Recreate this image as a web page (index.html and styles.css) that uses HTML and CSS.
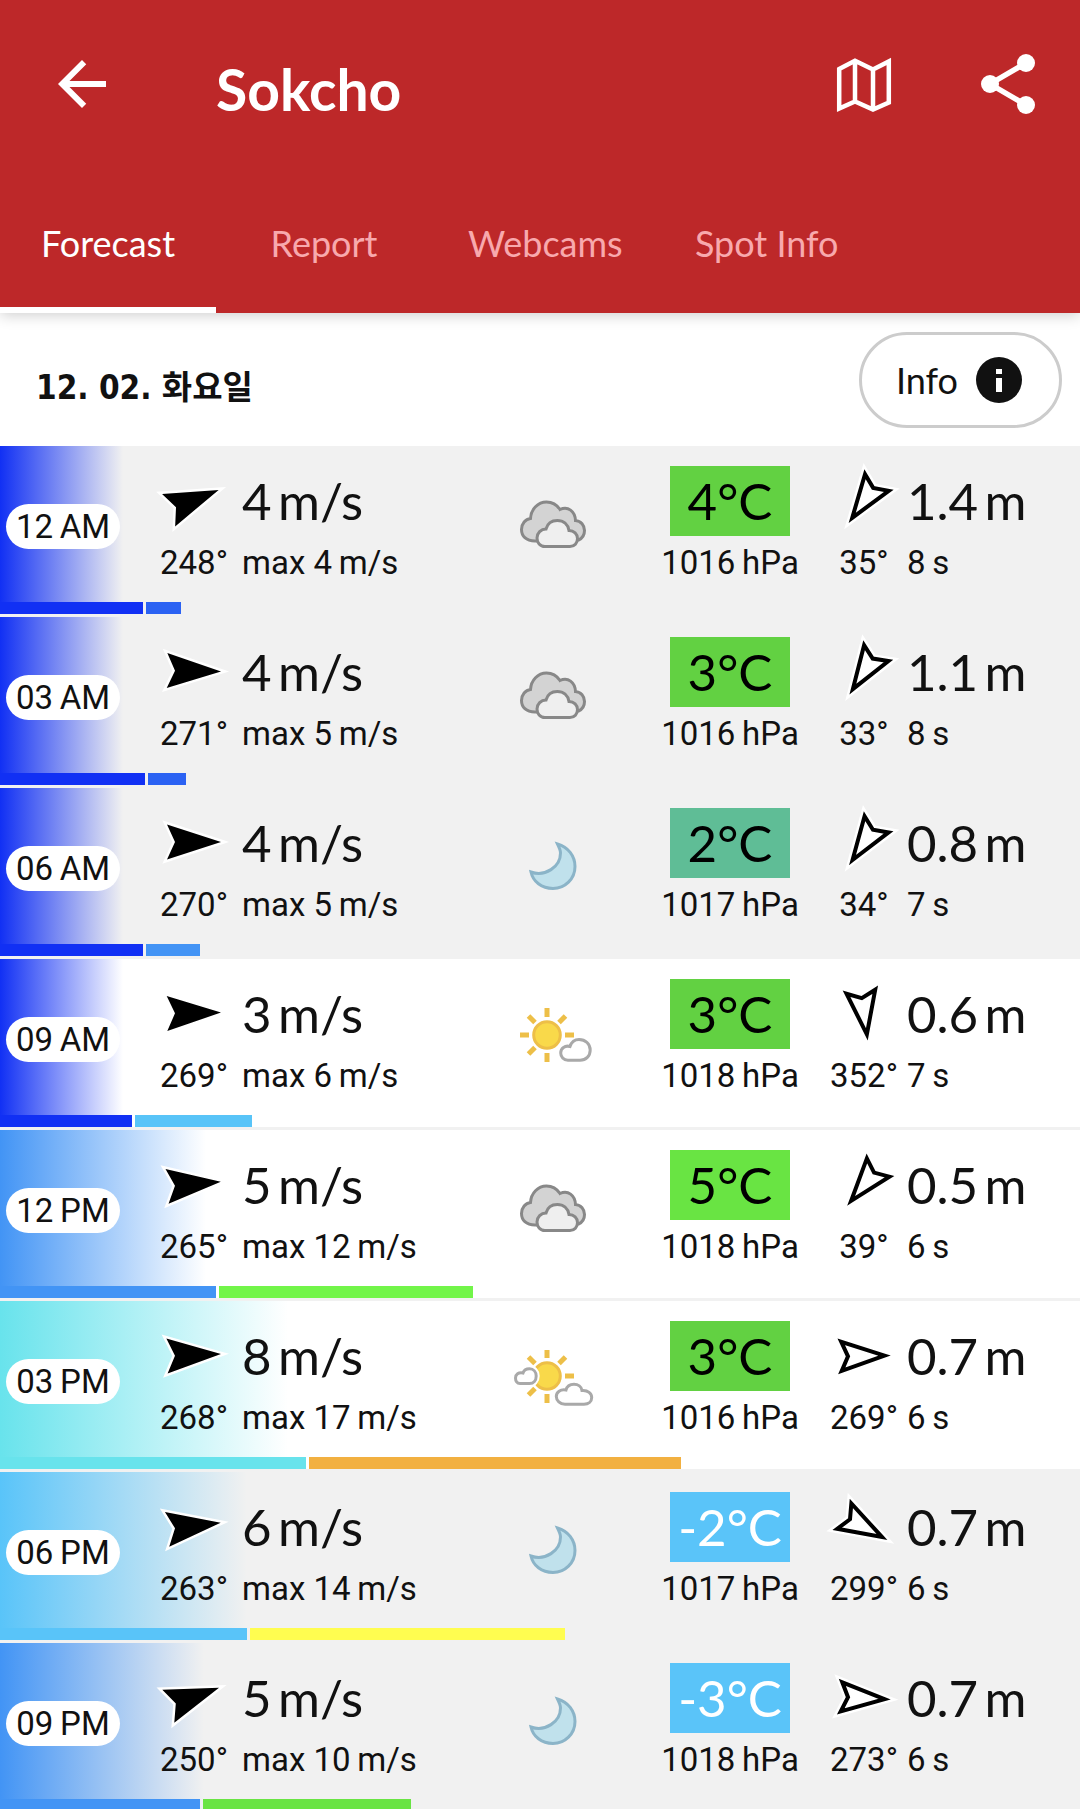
FILE: index.html
```html
<!DOCTYPE html>
<html lang="en">
<head>
<meta charset="utf-8">
<meta name="viewport" content="width=device-width, initial-scale=1">
<title>Sokcho</title>
<link rel="stylesheet" href="styles.css">
</head>
<body>
<svg class="sprite" aria-hidden="true">
  <symbol id="arrow-solid" viewBox="-35 -34 72 70">
    <path class="halo" d="M28 0L-26-17.5L-18 0L-26 17.5Z" stroke-width="5"/>
    <path d="M28 0L-26-17.5L-18 0L-26 17.5Z"/>
  </symbol>
  <symbol id="arrow-hollow" viewBox="-36 -35 72 70">
    <path class="halo" d="M20.5 0L-22.5-14.5L-16 0L-22.5 14.5Z" stroke-width="9"/>
    <path d="M20.5 0L-22.5-14.5L-16 0L-22.5 14.5Z" fill="#fff" stroke="#000" stroke-width="4"/>
  </symbol>
  <symbol id="cloudy" viewBox="0 0 90 70">
    <g stroke="#888" stroke-width="3">
      <path fill="#d3d3d3" d="M27 52C18 52 13.5 47 13.5 40.5C13.5 34.5 17.5 30 22.5 29.5C23 20 30 13 38.5 13C44 13 49 16 52 20.5C60 17 67 22 67.5 31.5C73 32 76.5 36.5 76.5 41.5C76.5 46 74 49.5 70.5 51Z"/>
      <path fill="#efefef" d="M37 57.5C32 57.5 29 53.5 29 49C29 44 33 40 38 40C39.5 34.5 44 31.5 49.3 31.5C55.5 31.5 60 35.5 61 41.5C66 41.5 69.5 45 69.5 49.5C69.5 54 66.5 57.5 62 57.5Z"/>
    </g>
  </symbol>
  <symbol id="moon" viewBox="0 0 90 70">
    <path fill="#c0e1ec" stroke="#8bb4c8" stroke-width="3" d="M49.5 13C60 16 67 25 67 35.5C67 48 57 57.5 45 57.5C33.5 57.5 25 50.5 23 41C37 46 52.5 36 52.5 22C52.5 19 51 16 49.5 13Z"/>
  </symbol>
  <symbol id="sun-cloud" viewBox="0 0 90 70">
    <circle cx="39" cy="33" r="13.3" fill="#f9d94a" stroke="#edbf48" stroke-width="3"/>
    <path stroke="#edbf48" stroke-width="5" d="M39 6V15M39 51V60M12 33H21M57 33H66M20.5 14L27 20.5M57.5 14L51 20.5M20.5 52L27 45.5"/>
    <path fill="#fff" stroke="#a9a9a9" stroke-width="3" d="M60 58.2C55.5 58.2 52.7 54.5 52.7 51C52.7 46.5 57 43 62 44.5C63.5 40 67 37.5 71 37.5C77.5 37.5 82.2 42 82.2 48C82.2 54 78 58.2 72 58.2Z"/>
  </symbol>
  <symbol id="sun-clouds" viewBox="0 0 90 70">
    <circle cx="39" cy="32" r="13.3" fill="#f9d94a" stroke="#edbf48" stroke-width="3"/>
    <path stroke="#edbf48" stroke-width="5" d="M39 6V14M39 50V59M57 32H66M20.5 13L27 19.5M57.5 13L51 19.5M20.5 51L27 44.5"/>
    <path fill="#fff" stroke="#fff" stroke-width="7" d="M12 39.5C9 39.5 7.5 37 7.5 34C7.5 30.5 10.5 28 15 29C16 26 18.5 24.8 21.5 24.8C25.5 24.8 28.2 28 28.2 32C28.2 36.5 25.5 39.5 21.5 39.5Z"/>
    <g fill="#fff" stroke="#a9a9a9" stroke-width="3">
      <path d="M12 39.5C9 39.5 7.5 37 7.5 34C7.5 30.5 10.5 28 15 29C16 26 18.5 24.8 21.5 24.8C25.5 24.8 28.2 28 28.2 32C28.2 36.5 25.5 39.5 21.5 39.5Z"/>
      <path d="M57 60.2C52 60.2 48.3 56.5 48.3 52.5C48.3 48 52.5 45 58 46C59 42 62 40.2 66 40.2C70 40.2 73.5 42.5 74 46.5C80 46 83.7 49.5 83.7 53.5C83.7 57.5 80.5 60.2 76 60.2Z"/>
    </g>
  </symbol>
</svg>

<header class="app-header">
  <div class="toolbar">
    <button class="icon-button" type="button" aria-label="Back">
      <svg viewBox="0 0 24 24"><path fill="#fff" d="M20 11H7.83l5.59-5.59L12 4l-8 8 8 8 1.41-1.41L7.83 13H20z"/></svg>
    </button>
    <h1 class="title">Sokcho</h1>
    <button class="icon-button" type="button" aria-label="Map">
      <svg viewBox="0 0 72 72"><path fill="none" stroke="#fff" stroke-width="4.5" d="M11.2 21L27 12.8L45 21.5L60.8 13.5V54.5L45 61.5L27 53.5L11.2 60.5ZM27 12.8V53.5M45 21.5V61.5"/></svg>
    </button>
    <button class="icon-button" type="button" aria-label="Share">
      <svg viewBox="0 0 24 24"><path fill="none" stroke="#fff" stroke-width="1.8" d="M18 5L6 12L18 19"/><g fill="#fff"><circle cx="18" cy="5" r="3"/><circle cx="6" cy="12" r="3"/><circle cx="18" cy="19" r="3"/></g></svg>
    </button>
  </div>
  <nav class="tabs">
    <a class="tab active" href="#forecast">Forecast</a>
    <a class="tab" href="#report">Report</a>
    <a class="tab" href="#webcams">Webcams</a>
    <a class="tab" href="#spot">Spot Info</a>
  </nav>
</header>

<main class="forecast" id="forecast">
  <div class="day-bar">
    <h2 class="day">12. 02. 화요일</h2>
    <button class="info" type="button">Info
      <svg viewBox="0 0 46 46" aria-hidden="true"><circle cx="23" cy="23" r="23" fill="#111"/><path fill="#fff" d="M20 12h6v5h-6zM20 21h6v14h-6z"/></svg>
    </button>
  </div>

  <table class="hours">
    <tbody>
      <tr class="hour night" style="--wind:#1130f4;--fade:123px">
        <th class="time" scope="row"><span>12&thinsp;AM</span></th>
        <td class="dir"><svg style="--turn:-22deg"><use href="#arrow-solid"/></svg><small>248°</small></td>
        <td class="value"><b>4&thinsp;m/s</b><small>max 4&thinsp;m/s</small></td>
        <td class="sky"><svg><use href="#cloudy"/></svg></td>
        <td class="air"><b class="mild">4°C</b><small>1016&thinsp;hPa</small></td>
        <td class="dir"><svg style="--turn:125deg"><use href="#arrow-hollow"/></svg><small>35°</small></td>
        <td class="value"><b>1.4&thinsp;m</b><small>8&thinsp;s</small></td>
        <td class="bars"><i style="width:13.2%"></i><i style="width:3.3%;background:#2b62f3"></i></td>
      </tr>
      <tr class="hour night" style="--wind:#1130f4;--fade:123px">
        <th class="time" scope="row"><span>03&thinsp;AM</span></th>
        <td class="dir"><svg style="--turn:1deg"><use href="#arrow-solid"/></svg><small>271°</small></td>
        <td class="value"><b>4&thinsp;m/s</b><small>max 5&thinsp;m/s</small></td>
        <td class="sky"><svg><use href="#cloudy"/></svg></td>
        <td class="air"><b class="mild">3°C</b><small>1016&thinsp;hPa</small></td>
        <td class="dir"><svg style="--turn:123deg"><use href="#arrow-hollow"/></svg><small>33°</small></td>
        <td class="value"><b>1.1&thinsp;m</b><small>8&thinsp;s</small></td>
        <td class="bars"><i style="width:13.4%"></i><i style="width:3.5%;background:#2b62f3"></i></td>
      </tr>
      <tr class="hour night" style="--wind:#1130f4;--fade:123px">
        <th class="time" scope="row"><span>06&thinsp;AM</span></th>
        <td class="dir"><svg style="--turn:0deg"><use href="#arrow-solid"/></svg><small>270°</small></td>
        <td class="value"><b>4&thinsp;m/s</b><small>max 5&thinsp;m/s</small></td>
        <td class="sky"><svg><use href="#moon"/></svg></td>
        <td class="air"><b class="cool">2°C</b><small>1017&thinsp;hPa</small></td>
        <td class="dir"><svg style="--turn:124deg"><use href="#arrow-hollow"/></svg><small>34°</small></td>
        <td class="value"><b>0.8&thinsp;m</b><small>7&thinsp;s</small></td>
        <td class="bars"><i style="width:13.2%"></i><i style="width:5%;background:#4394f5"></i></td>
      </tr>
      <tr class="hour" style="--wind:#1130f4;--fade:123px">
        <th class="time" scope="row"><span>09&thinsp;AM</span></th>
        <td class="dir"><svg style="--turn:-1deg"><use href="#arrow-solid"/></svg><small>269°</small></td>
        <td class="value"><b>3&thinsp;m/s</b><small>max 6&thinsp;m/s</small></td>
        <td class="sky"><svg><use href="#sun-cloud"/></svg></td>
        <td class="air"><b class="mild">3°C</b><small>1018&thinsp;hPa</small></td>
        <td class="dir"><svg style="--turn:82deg"><use href="#arrow-hollow"/></svg><small>352°</small></td>
        <td class="value"><b>0.6&thinsp;m</b><small>7&thinsp;s</small></td>
        <td class="bars"><i style="width:12.2%"></i><i style="width:10.9%;background:#58c4f8"></i></td>
      </tr>
      <tr class="hour" style="--wind:#4294f5;--fade:206px">
        <th class="time" scope="row"><span>12&thinsp;PM</span></th>
        <td class="dir"><svg style="--turn:-5deg"><use href="#arrow-solid"/></svg><small>265°</small></td>
        <td class="value"><b>5&thinsp;m/s</b><small>max 12&thinsp;m/s</small></td>
        <td class="sky"><svg><use href="#cloudy"/></svg></td>
        <td class="air"><b class="warm">5°C</b><small>1018&thinsp;hPa</small></td>
        <td class="dir"><svg style="--turn:129deg"><use href="#arrow-hollow"/></svg><small>39°</small></td>
        <td class="value"><b>0.5&thinsp;m</b><small>6&thinsp;s</small></td>
        <td class="bars"><i style="width:20%"></i><i style="width:23.5%;background:#72f549"></i></td>
      </tr>
      <tr class="hour" style="--wind:#68e3ec;--fade:288px">
        <th class="time" scope="row"><span>03&thinsp;PM</span></th>
        <td class="dir"><svg style="--turn:-2deg"><use href="#arrow-solid"/></svg><small>268°</small></td>
        <td class="value"><b>8&thinsp;m/s</b><small>max 17&thinsp;m/s</small></td>
        <td class="sky"><svg><use href="#sun-clouds"/></svg></td>
        <td class="air"><b class="mild">3°C</b><small>1016&thinsp;hPa</small></td>
        <td class="dir"><svg style="--turn:-1deg"><use href="#arrow-hollow"/></svg><small>269°</small></td>
        <td class="value"><b>0.7&thinsp;m</b><small>6&thinsp;s</small></td>
        <td class="bars"><i style="width:28.3%"></i><i style="width:34.5%;background:#f2b040"></i></td>
      </tr>
      <tr class="hour night" style="--wind:#59c4f9;--fade:247px">
        <th class="time" scope="row"><span>06&thinsp;PM</span></th>
        <td class="dir"><svg style="--turn:-7deg"><use href="#arrow-solid"/></svg><small>263°</small></td>
        <td class="value"><b>6&thinsp;m/s</b><small>max 14&thinsp;m/s</small></td>
        <td class="sky"><svg><use href="#moon"/></svg></td>
        <td class="air"><b class="cold">-2°C</b><small>1017&thinsp;hPa</small></td>
        <td class="dir"><svg style="--turn:29deg"><use href="#arrow-hollow"/></svg><small>299°</small></td>
        <td class="value"><b>0.7&thinsp;m</b><small>6&thinsp;s</small></td>
        <td class="bars"><i style="width:22.9%"></i><i style="width:29.1%;background:#fffd50"></i></td>
      </tr>
      <tr class="hour night" style="--wind:#4294f5;--fade:204px">
        <th class="time" scope="row"><span>09&thinsp;PM</span></th>
        <td class="dir"><svg style="--turn:-20deg"><use href="#arrow-solid"/></svg><small>250°</small></td>
        <td class="value"><b>5&thinsp;m/s</b><small>max 10&thinsp;m/s</small></td>
        <td class="sky"><svg><use href="#moon"/></svg></td>
        <td class="air"><b class="cold">-3°C</b><small>1018&thinsp;hPa</small></td>
        <td class="dir"><svg style="--turn:3deg"><use href="#arrow-hollow"/></svg><small>273°</small></td>
        <td class="value"><b>0.7&thinsp;m</b><small>6&thinsp;s</small></td>
        <td class="bars"><i style="width:18.5%"></i><i style="width:19.3%;background:#69e443"></i></td>
      </tr>
    </tbody>
  </table>
</main>
</body>
</html>
```
FILE: styles.css
```css
* {
  box-sizing: border-box;
}

body {
  margin: 0;
  height: 100vh;
  display: flex;
  flex-direction: column;
  overflow: hidden;
  background: #fff;
  color: #111;
  font-family: Roboto, "Noto Sans CJK KR", sans-serif;
}

button {
  padding: 0;
  border: 0;
  background: none;
  color: inherit;
  font: inherit;
}

.sprite {
  position: absolute;
  width: 0;
  height: 0;
}

.halo {
  fill: #fff;
  stroke: #fff;
  stroke-miterlimit: 10;
}

/* Header */
.app-header {
  position: relative;
  z-index: 1;
  flex: none;
  background: #bd2829;
  box-shadow: 0 2px 14px rgba(0, 0, 0, 0.2);
  color: #fff;
  font-family: Lato, sans-serif;
}

.toolbar {
  display: flex;
  align-items: center;
  gap: 72px;
  height: 168px;
  padding: 0 36px 0 46px;
}

.icon-button {
  flex: none;
  width: 72px;
  height: 72px;
}

.icon-button svg {
  display: block;
  width: 72px;
  height: 72px;
}

.title {
  flex: 1;
  margin: 0;
  padding: 10px 0 0 26px;
  font-size: 57px;
  line-height: 68px;
  font-weight: 700;
}

.tabs {
  display: flex;
  height: 145px;
}

.tab {
  min-width: 216px;
  padding: 5px 36px 0;
  color: #f8a9ad;
  font-size: 36px;
  line-height: 140px;
  text-align: center;
  text-decoration: none;
  white-space: nowrap;
}

.tab.active {
  box-shadow: inset 0 -6px #fff;
  color: #fff;
}

/* Day heading */
.forecast {
  flex: 1;
  min-height: 0;
  overflow-y: auto;
  scrollbar-width: none;
}

.day-bar {
  display: flex;
  align-items: center;
  justify-content: space-between;
  height: 133px;
  padding: 0 18px 0 36px;
}

.day {
  margin: 0;
  padding-top: 16px;
  font: 700 33px/46px "DejaVu Sans Condensed", "Noto Sans CJK KR", sans-serif;
}

.info {
  display: flex;
  align-items: center;
  gap: 18px;
  height: 96px;
  padding: 0 37px 0 34px;
  border: 3px solid #ccc;
  border-radius: 48px;
  background: #fff;
  font-family: Lato, sans-serif;
  font-size: 36px;
}

.info svg {
  width: 46px;
  height: 46px;
}

/* Forecast rows */
.hours,
.hours tbody {
  display: block;
}

.hour {
  display: grid;
  grid-template-columns: 146px 96px 225fr 172fr 182fr 86px 173fr;
  grid-template-rows: 144px 12px;
  row-gap: 12px;
  border-bottom: 3px solid #f1f1f1;
  background: linear-gradient(to right, var(--wind), transparent) no-repeat 0 0 / var(--fade) 168px, #fff;
}

.hour.night {
  background-color: #f1f1f1;
}

.hour td,
.hour th {
  display: flex;
  flex-direction: column;
  padding: 20px 0 0;
  font-size: 33px;
  font-weight: 400;
  white-space: nowrap;
}

.hour small {
  font-size: 33px;
  line-height: 53px;
}

.hour b {
  font-family: Lato, sans-serif;
  font-size: 51px;
  line-height: 70px;
  font-weight: 400;
}

.hour .time {
  align-items: flex-start;
  padding: 58px 0 0 6px;
}

.time span {
  width: 114px;
  border-radius: 23px;
  background: #fff;
  line-height: 45px;
  text-align: center;
}

.hour .dir,
.hour .sky,
.hour .air {
  align-items: center;
}

.dir svg {
  width: 72px;
  height: 70px;
  transform: rotate(var(--turn));
}

.hour .sky {
  justify-content: center;
  padding: 12px 0 0;
}

.sky svg {
  width: 90px;
  height: 70px;
}

.air b {
  width: 120px;
  color: #000;
  text-align: center;
}

.mild {
  background: #62d142;
}

.warm {
  background: #69e443;
}

.cool {
  background: #5fbd96;
}

.air .cold {
  background: #5ac4f9;
  color: #fff;
}

.hour .bars {
  grid-column: 1 / -1;
  flex-direction: row;
  gap: 3px;
  padding: 0;
}

.bars i {
  background: var(--wind);
}
```
